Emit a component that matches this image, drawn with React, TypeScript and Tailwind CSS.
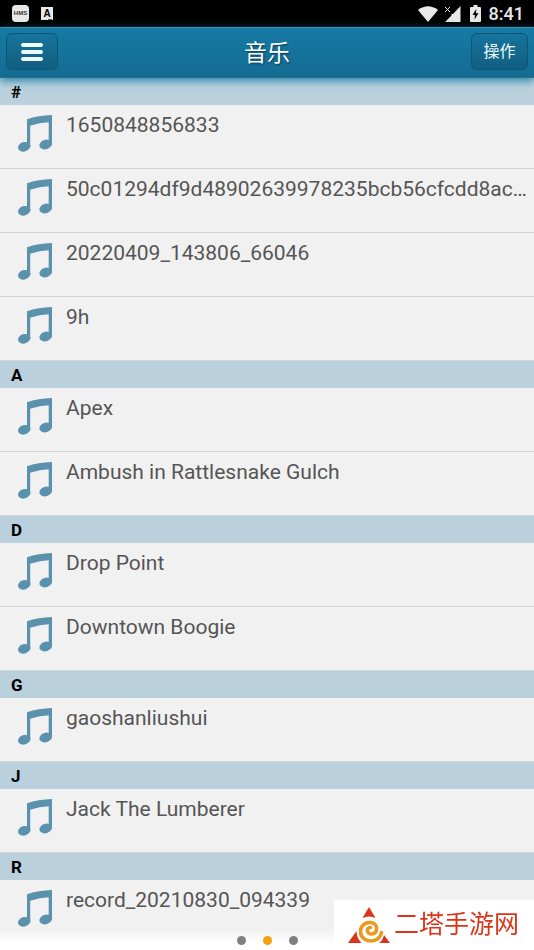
import { useState } from 'react';

interface Section {
  letter: string;
  tracks: string[];
}

const sections: Section[] = [
  {
    letter: '#',
    tracks: [
      '1650848856833',
      '50c01294df9d48902639978235bcb56cfcdd8ac…',
      '20220409_143806_66046',
      '9h',
    ],
  },
  { letter: 'A', tracks: ['Apex', 'Ambush in Rattlesnake Gulch'] },
  { letter: 'D', tracks: ['Drop Point', 'Downtown Boogie'] },
  { letter: 'G', tracks: ['gaoshanliushui'] },
  { letter: 'J', tracks: ['Jack The Lumberer'] },
  { letter: 'R', tracks: ['record_20210830_094339'] },
];

const pages = ['1', '2', '3'];

function NoteIcon() {
  return (
    <svg viewBox="0 0 34 37" className="h-[37px] w-[34px] shrink-0 fill-[#5a92ad]" aria-hidden="true">
      <path d="M9 4.300Q20 .4 34 0V30H30.700V7.200Q22 7.400 12.200 10.700V32H9Z" />
      <ellipse cx="6.200" cy="31.800" rx="6.300" ry="4.700" transform="rotate(-18 6.200 31.800)" />
      <ellipse cx="27.700" cy="29.500" rx="6.400" ry="4.700" transform="rotate(-18 27.700 29.500)" />
    </svg>
  );
}

function StatusBar() {
  return (
    <div className="flex h-[27px] items-center justify-between bg-black pr-[10px] pl-3 text-[#e8e8e8]">
      <div className="flex items-center gap-3">
        <span className="flex h-[17px] w-[17px] items-center justify-center rounded-sm bg-[#e8e8e8] font-['Liberation_Sans'] text-[6px] font-bold text-[#333]">
          HMS
        </span>
        <span className="relative flex h-[13px] w-3 items-center justify-center bg-[#e8e8e8] font-['Liberation_Sans'] text-[10px] font-bold text-black">
          A
          <i className="absolute right-px bottom-0 h-px w-1 bg-[#555]" />
        </span>
      </div>
      <div className="flex items-center">
        <svg viewBox="0 0 20 16" className="mr-1.5 h-4 w-5 fill-current" aria-hidden="true">
          <path d="M0 4Q10-3.500 20 4L10 16Z" />
        </svg>
        <svg viewBox="0 0 17 16" className="mr-[9px] h-4 w-[17px]" aria-hidden="true">
          <path d="M16.500 0V16H1L7.500 9.500V8H9Z" fill="currentColor" />
          <path d="M1 1L6 6M6 1L1 6" stroke="currentColor" fill="none" />
        </svg>
        <svg viewBox="0 0 11 17" className="mr-2 h-[17px] w-[11px]" aria-hidden="true">
          <path d="M3.500 0H7.500V2H10Q11 2 11 3V16Q11 17 10 17H1Q0 17 0 16V3Q0 2 1 2H3.500Z" fill="currentColor" />
          <path d="M6.300 4L2.500 10H5L4.500 14.500L8.500 8.300H6Z" fill="#000" />
        </svg>
        <span className="text-lg leading-5 font-medium">8:41</span>
      </div>
    </div>
  );
}

function Header() {
  return (
    <header className="relative z-10 grid h-[51px] grid-cols-[1fr_auto_1fr] items-center border-t border-b border-t-[#3a91b3] border-b-[#2c6f8c] bg-linear-to-b from-[#167ba5] to-[#146b91] px-1.5 pb-0.5 text-white shadow-[0_3px_8px_#2b86ab]">
      <button
        aria-label="菜单"
        className="flex h-[37px] w-[52px] flex-col items-center justify-center gap-[3px] rounded-md border border-[#0d5675] bg-linear-to-b from-[#15749c] to-[#125e80]"
      >
        <i className="h-1 w-[22px] rounded-full bg-[#eefaff]" />
        <i className="h-1 w-[22px] rounded-full bg-[#eefaff]" />
        <i className="h-1 w-[22px] rounded-full bg-[#eefaff]" />
      </button>
      <h1 className="pt-1 text-[23px] leading-8 text-shadow-[1px_1px_2px_#083a50]">音乐</h1>
      <button className="h-[37px] w-[57px] justify-self-end rounded-md border border-[#0d5675] bg-linear-to-b from-[#15749c] to-[#125e80] text-base text-[#eefaff]">
        操作
      </button>
    </header>
  );
}

function SiteLogo() {
  return (
    <div className="flex h-[50px] w-[200px] items-center gap-1 bg-white pl-3.5">
      <svg viewBox="0 0 42 37" className="h-[37px] w-[42px]" aria-hidden="true">
        <path d="M21 0L27.500 11Q21 8 14.500 11ZM8.500 24Q8.500 31 13.500 36H0ZM36 28L42 36H31Q35 33 36 28Z" fill="#dc3419" />
        <path
          d="M22.500 20.500C19.500 20.500 18.500 23.500 20 25.500C22 28 27.500 27.500 28.500 23C29.500 18 25.500 15.300 21.500 15.500C15.500 15.800 12 20.500 12.500 25.500C13 30.500 17.500 34.200 23 34C28.500 33.800 32.500 30.500 33.500 25.500"
          fill="none"
          stroke="#ec981c"
          strokeWidth="3.500"
          strokeLinecap="round"
        />
      </svg>
      <span className="text-[25px] leading-8 whitespace-nowrap text-[#dc3419]">二塔手游网</span>
    </div>
  );
}

export default function App() {
  const [page, setPage] = useState(1);

  return (
    <div className="min-h-screen bg-[#f1f1f1] font-[Roboto,'Noto_Sans_CJK_SC',sans-serif]">
      <StatusBar />
      <Header />

      <main>
        {sections.map(section => (
          <section key={section.letter}>
            <h2 className="h-[27px] bg-[#bad1dd] pl-[11px] text-[17px] leading-[29px] font-bold text-black">
              {section.letter}
            </h2>
            <ul>
              {section.tracks.map(track => (
                <li
                  key={track}
                  className="flex h-16 items-start gap-3.5 border-b border-[#d3d5d7] pt-2 pl-[18px]"
                >
                  <div className="pt-0.5">
                    <NoteIcon />
                  </div>
                  <span className="min-w-0 truncate text-[21px] leading-6 text-[#555]">{track}</span>
                </li>
              ))}
            </ul>
          </section>
        ))}
      </main>

      {/* Page dots over the end of the list */}
      <footer className="fixed inset-x-0 bottom-0 z-20">
        <div className="flex h-5 items-center justify-center gap-[17px] bg-linear-to-b from-[#f1f1f1] to-white to-60%">
          {pages.map((name, idx) => (
            <button
              key={name}
              aria-label={name}
              onClick={() => setPage(idx)}
              className={`h-[9px] w-[9px] rounded-full ${idx === page ? 'bg-[#f5a00f]' : 'bg-[#808080]'}`}
            />
          ))}
        </div>
        <div className="absolute right-0 bottom-0">
          <SiteLogo />
        </div>
      </footer>
    </div>
  );
}
